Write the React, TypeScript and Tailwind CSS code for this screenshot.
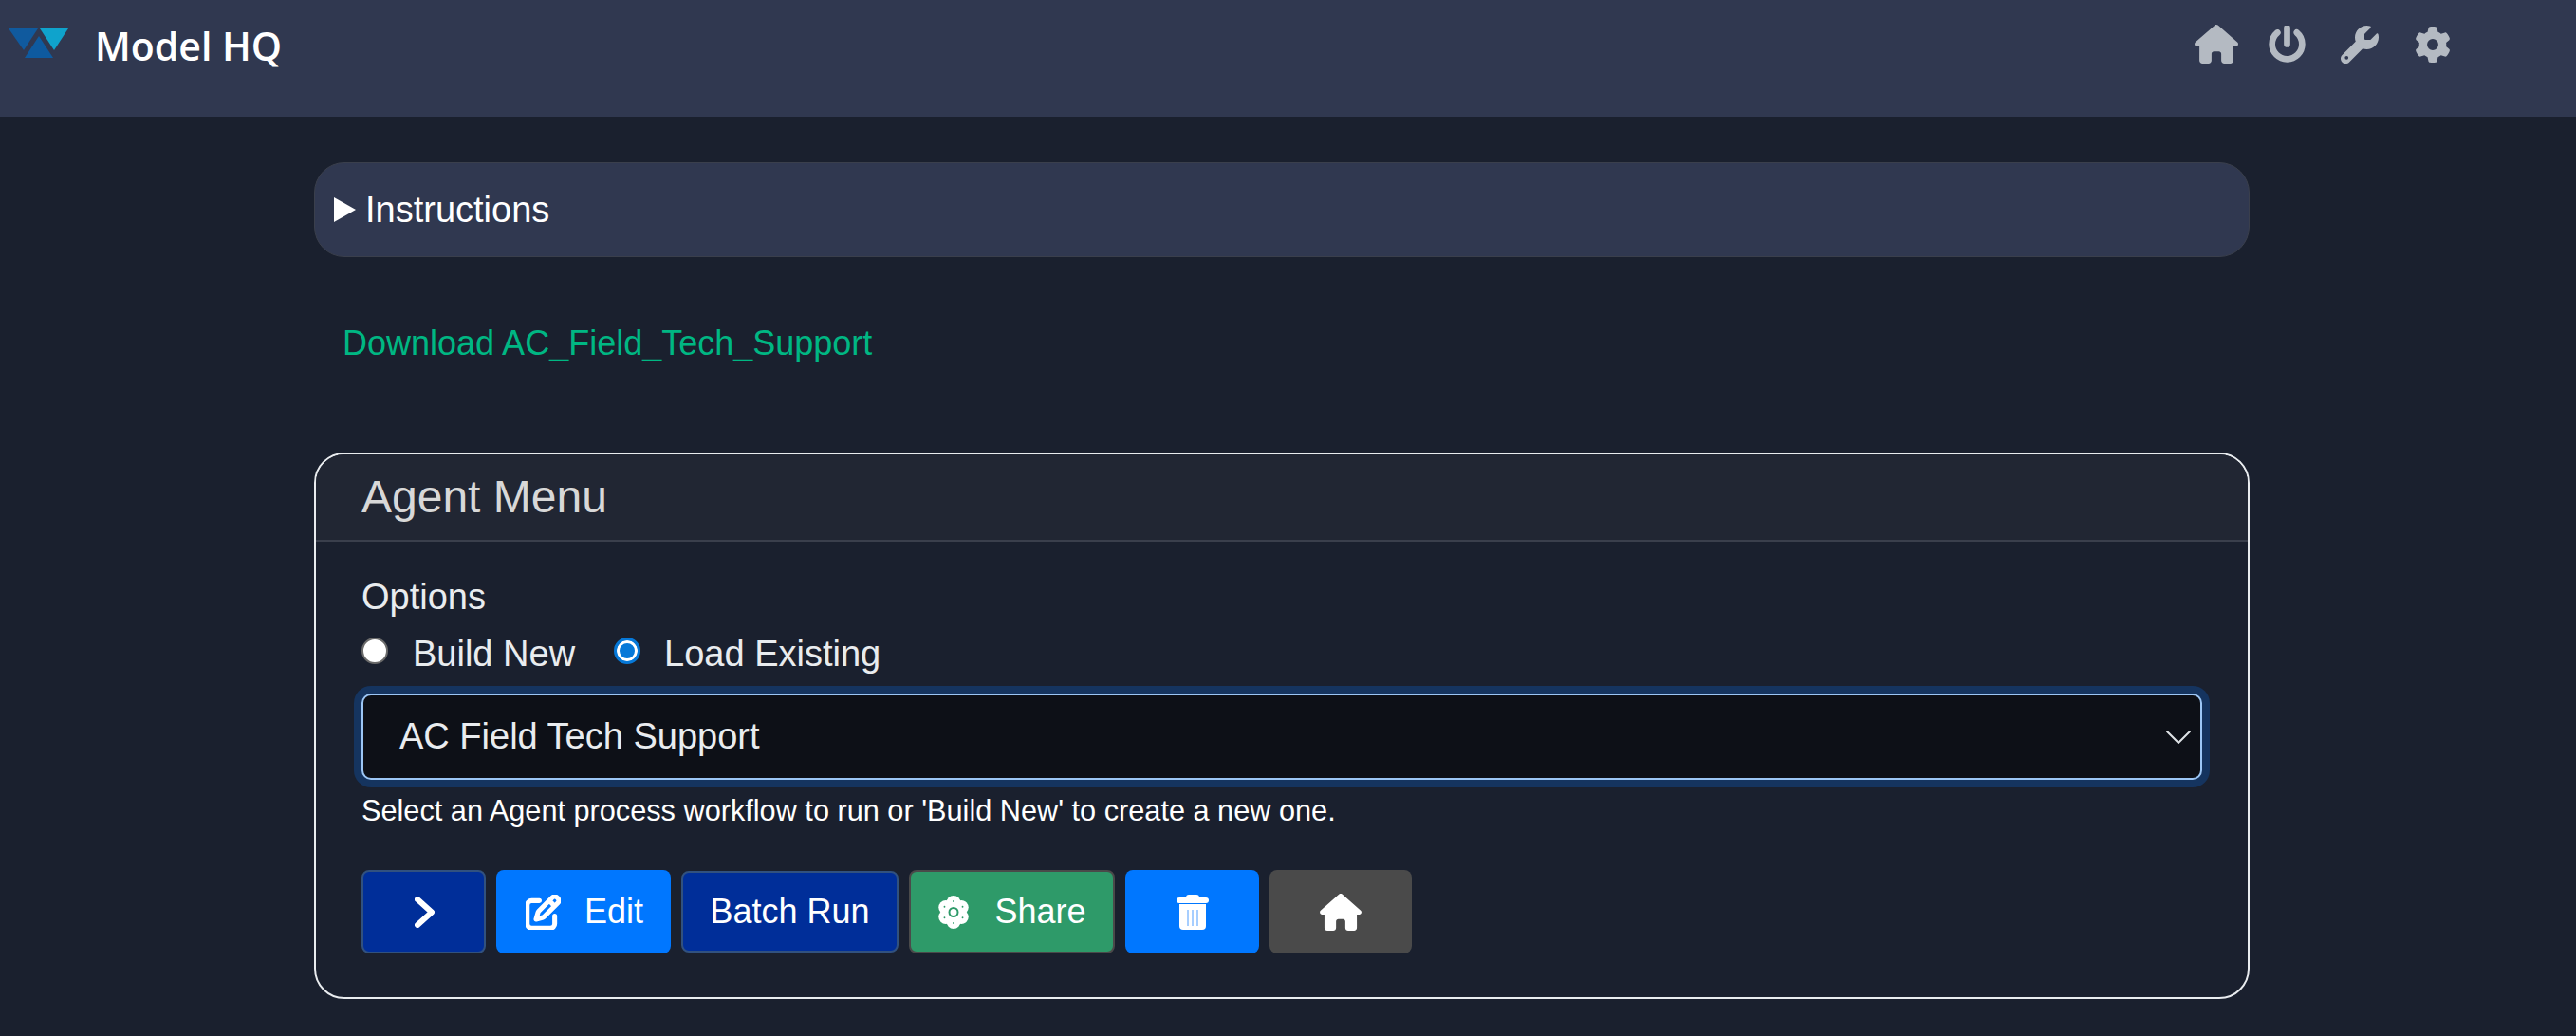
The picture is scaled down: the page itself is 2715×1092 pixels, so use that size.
import { FaHouse, FaPowerOff, FaWrench, FaGear, FaRegPenToSquare } from 'react-icons/fa6';

// Top bar with logo and the four grey tool icons
function TopBar() {
  return (
    <div className="h-[123px] bg-[#303850] flex items-start shrink-0">
      <svg width="64" height="32" viewBox="0 0 64 32" className="ml-[9px] mt-[30px] shrink-0">
        <polygon points="0,0 31,0 16,23" fill="#105a9e" />
        <polygon points="33,0 63,0 48,23" fill="#0fa3cc" />
        <polygon points="17,31 47,31 32,8" fill="#0e5a9f" />
      </svg>
      <div className="ml-[27px] mt-[23px] text-[41px] leading-[50px] font-semibold text-white font-['Open_Sans','Noto_Sans',sans-serif]">
        Model HQ
      </div>
      <div className="ml-auto mr-[132px] mt-[26px] flex items-center text-[#b4bac2]">
        <FaHouse className="w-[46px] h-[41px]" />
        <FaPowerOff className="ml-[32px] w-[39px] h-[39px]" strokeWidth={24} />
        <FaWrench className="ml-[37px] w-[40px] h-[40px]" />
        <FaGear className="ml-[38px] w-[38px] h-[40px]" />
      </div>
    </div>
  );
}

function ActionButton({ className, children }: { className: string; children: React.ReactNode }) {
  return (
    <button className={`flex items-center justify-center rounded-[8px] text-white text-[36px] ${className}`}>
      {children}
    </button>
  );
}

function ShareIcon() {
  const angles = [30, 90, 150, 210, 270, 330];
  return (
    <svg viewBox="0 0 34 37" className="w-[34px] h-[37px]">
      {angles.map((a) => {
        const x = 17 + 9.5 * Math.cos((a * Math.PI) / 180);
        const y = 18.5 + 10 * Math.sin((a * Math.PI) / 180);
        return <circle key={a} cx={x} cy={y} r="7.5" fill="white" />;
      })}
      <circle cx="17" cy="18.5" r="9" fill="white" />
      <circle cx="17" cy="18.5" r="4.5" fill="white" stroke="#2e9a69" strokeWidth="2" />
      {angles.map((a) => (
        <circle
          key={a}
          cx={17 + 11 * Math.cos((a * Math.PI) / 180)}
          cy={18.5 + 11.5 * Math.sin((a * Math.PI) / 180)}
          r="0.9"
          fill="#2e9a69"
        />
      ))}
    </svg>
  );
}

function TrashIcon() {
  return (
    <svg viewBox="0 0 34 37" className="w-[34px] h-[37px]">
      <rect x="10" y="0" width="14" height="6" rx="3" fill="white" />
      <rect x="0" y="3" width="34" height="6" rx="3" fill="white" />
      <path d="M3 10h28v23a4 4 0 0 1-4 4H7a4 4 0 0 1-4-4z" fill="white" />
      <path d="M12 16v17M17 16v17M22 16v17" stroke="#4f9dff" strokeWidth="1" />
    </svg>
  );
}

export default function App() {
  return (
    <div className="min-h-[1092px] bg-[#1a202e] flex flex-col font-['Liberation_Sans',Arial,sans-serif] text-white">
      <TopBar />

      <div className="ml-[331px] w-[2040px] pt-[48px]">
        {/* Instructions */}
        <div className="h-[100px] rounded-[32px] bg-[#303850] border border-[#3a3f4c] flex items-center pl-[20px]">
          <span className="w-0 h-0 border-y-[13px] border-y-transparent border-l-[23px] border-l-white" />
          <span className="ml-[10px] text-[38px]">Instructions</span>
        </div>

        <div className="mt-[69px] pl-[30px] text-[36px] leading-[44px] text-[#00b783]">
          Download AC_Field_Tech_Support
        </div>

        {/* Agent Menu card */}
        <div className="mt-[93px] h-[576px] rounded-[32px] border-2 border-[#e9ecef] overflow-hidden">
          <div className="h-[92px] bg-[#212633] border-b-2 border-[#3a3f4c] pl-[48px] flex items-center text-[48px] text-[#d8d8d8]">
            Agent Menu
          </div>
          <div className="pl-[48px] pr-[48px] pt-[36px]">
            <div className="text-[38px] leading-[44px] text-[#e9ecef]">Options</div>
            <div className="mt-[16px] flex items-center text-[38px] leading-[44px] text-[#e9ecef]">
              <span className="w-[28px] h-[28px] mb-[6px] rounded-full bg-white border-2 border-[#6a6a6a]" />
              <span className="ml-[26px]">Build New</span>
              <span className="ml-[41px] mb-[6px] w-[28px] h-[28px] rounded-full bg-[#0678d8] border-[3px] border-[#0678d8] shadow-[inset_0_0_0_3px_white]" />
              <span className="ml-[25px]">Load Existing</span>
            </div>
            <div className="mt-[20px] h-[91px] w-[1940px] rounded-[10px] bg-[#0d1017] border-2 border-[#9cc6f5] shadow-[0_0_0_8px_#15345f] flex items-center pl-[38px] pr-[7px]">
              <span className="text-[38px] text-[#e9ecef]">AC Field Tech Support</span>
              <svg viewBox="0 0 16 16" className="ml-auto w-[32px] h-[32px]" fill="none" stroke="#dee2e6" strokeWidth="1" strokeLinecap="round" strokeLinejoin="round">
                <path d="M2 5l6 6 6-6" />
              </svg>
            </div>
            <div className="mt-[15px] text-[30.7px] leading-[36px] text-white">
              Select an Agent process workflow to run or 'Build New' to create a new one.
            </div>
            <div className="mt-[44px] flex items-center gap-[11px]">
              <ActionButton className="w-[131px] h-[88px] bg-[#002e99] border-2 border-[#31517f]">
                <svg viewBox="0 0 21 33" className="ml-[2px] w-[21px] h-[33px]" fill="none" stroke="white" strokeWidth="6" strokeLinecap="round" strokeLinejoin="round">
                  <path d="M3 3l15 13.5L3 30" />
                </svg>
              </ActionButton>
              <ActionButton className="w-[184px] h-[88px] bg-[#0077ff] gap-[25px]">
                <FaRegPenToSquare className="ml-[2px] w-[37px] h-[37px]" strokeWidth={22} />
                <span>Edit</span>
              </ActionButton>
              <ActionButton className="w-[229px] h-[86px] bg-[#002e99] border-2 border-[#31517f]">
                Batch Run
              </ActionButton>
              <ActionButton className="w-[217px] h-[88px] bg-[#2e9a69] border-2 border-[#4a4a4a] gap-[26px]">
                <ShareIcon />
                <span>Share</span>
              </ActionButton>
              <ActionButton className="w-[141px] h-[88px] bg-[#0077ff]">
                <TrashIcon />
              </ActionButton>
              <ActionButton className="w-[150px] h-[88px] bg-[#4a4a4a]">
                <FaHouse className="w-[44px] h-[39px]" />
              </ActionButton>
            </div>
          </div>
        </div>
      </div>
    </div>
  );
}
